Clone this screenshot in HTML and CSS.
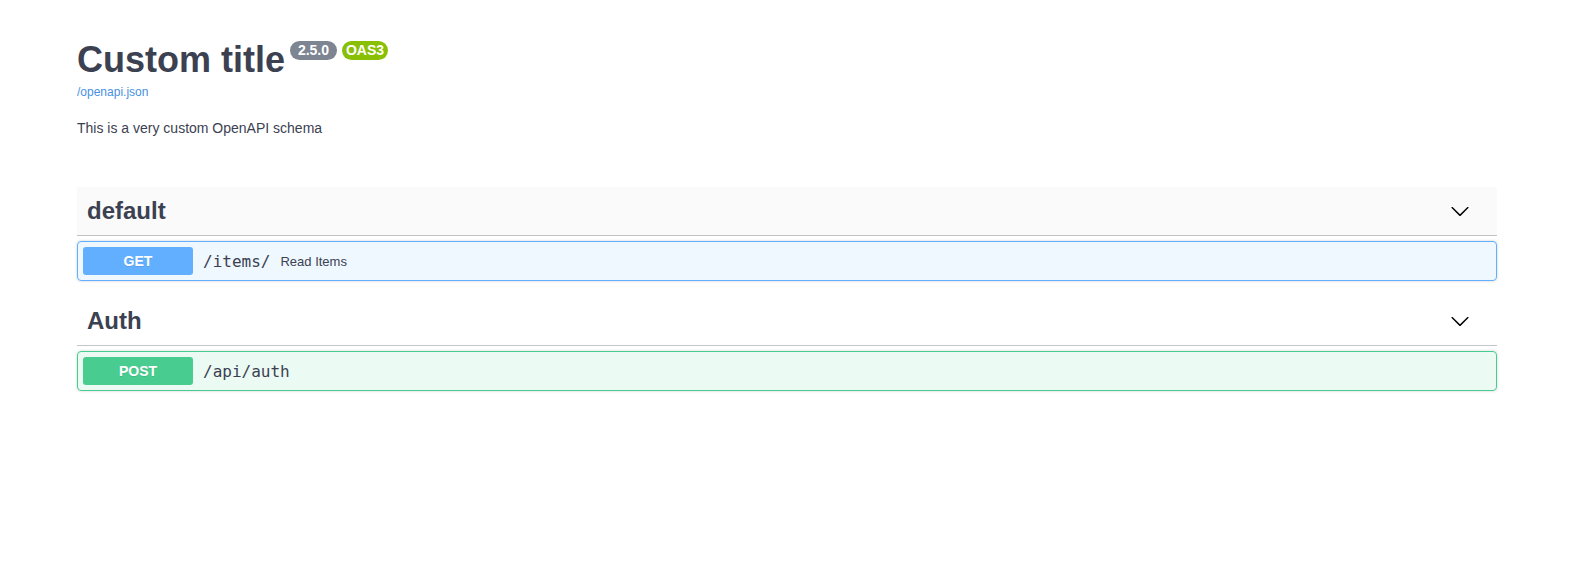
FILE: index.html
```
<!DOCTYPE html>
<html lang="en">
<head>
<meta charset="utf-8">
<title>Custom title - Swagger UI</title>
<link rel="stylesheet" href="styles.css">
</head>
<body>
<div class="swagger-ui">
  <div class="wrapper">
    <div class="info">
      <hgroup class="main">
        <h2 class="title">Custom title<span class="badges"><small class="badge"><pre class="version"> 2.5.0 </pre></small><small class="badge version-stamp"><pre class="version">OAS3</pre></small></span></h2>
        <a class="link" href="#">/openapi.json</a>
      </hgroup>
      <div class="description">
        <p>This is a very custom OpenAPI schema</p>
      </div>
    </div>

    <section class="tag-section">
      <h3 class="opblock-tag hovered">
        <span class="tag-name">default</span>
        <button class="expand-operation" aria-label="collapse">
          <svg viewBox="0 0 20 20" width="20" height="20"><path d="M17.418 6.109c.272-.268.709-.268.979 0s.271.701 0 .969l-7.908 7.83c-.27.268-.707.268-.979 0l-7.908-7.830c-.27-.268-.27-.701 0-.969.271-.268.709-.268.979 0L10 13.25l7.418-7.141z"/></svg>
        </button>
      </h3>
      <div class="opblock opblock-get">
        <div class="opblock-summary">
          <span class="method">GET</span>
          <span class="path">/items/</span>
          <span class="summary-desc">Read Items</span>
        </div>
      </div>
    </section>

    <section class="tag-section">
      <h3 class="opblock-tag">
        <span class="tag-name">Auth</span>
        <button class="expand-operation" aria-label="collapse">
          <svg viewBox="0 0 20 20" width="20" height="20"><path d="M17.418 6.109c.272-.268.709-.268.979 0s.271.701 0 .969l-7.908 7.83c-.27.268-.707.268-.979 0l-7.908-7.830c-.27-.268-.27-.701 0-.969.271-.268.709-.268.979 0L10 13.25l7.418-7.141z"/></svg>
        </button>
      </h3>
      <div class="opblock opblock-post">
        <div class="opblock-summary">
          <span class="method">POST</span>
          <span class="path">/api/auth</span>
        </div>
      </div>
    </section>
  </div>
</div>
</body>
</html>
```

FILE: styles.css
```
html, body {
  margin: 0;
  padding: 0;
  background: #fff;
}

body {
  font-family: "Liberation Sans", Arial, sans-serif;
  color: #3b4151;
}

.wrapper {
  width: 1420px;
  margin: 0 0 0 77px;
  padding-bottom: 40px;
}

.info {
  padding-top: 39px;
  margin-bottom: 51px;
}

.main {
  margin: 0 0 21px;
}

.title {
  display: flex;
  align-items: flex-start;
  margin: 0;
  font-size: 36px;
  line-height: 41px;
  font-weight: 700;
  color: #3b4151;
}

.badges {
  display: flex;
  gap: 5px;
  margin: 2px 0 0 5px;
}

.badge {
  display: inline-block;
  background: #7d8492;
  border-radius: 57px;
  padding: 2px 4px;
}

.badge.version-stamp {
  background: #89bf04;
}

.badge pre {
  margin: 0;
  padding: 0;
  font-family: "Liberation Sans", Arial, sans-serif;
  font-size: 14px;
  line-height: 15px;
  font-weight: 700;
  color: #fff;
  white-space: pre;
}

.link {
  display: block;
  margin-top: 5px;
  font-size: 12px;
  line-height: 14px;
  color: #4990e2;
  text-decoration: none;
}

.description p {
  margin: 0;
  font-size: 14px;
  line-height: 16px;
  color: #3b4151;
}

.tag-section {
  display: flex;
  flex-direction: column;
}

.opblock-tag {
  display: flex;
  align-items: center;
  margin: 0 0 5px;
  padding: 10px 20px 10px 10px;
  border-bottom: 1px solid rgba(59, 65, 81, 0.3);
  font-size: 24px;
  line-height: 28px;
  font-weight: 700;
  color: #3b4151;
}

.opblock-tag.hovered {
  background: rgba(0, 0, 0, 0.02);
}

.tag-name {
  flex: 1 1 auto;
}

.expand-operation {
  display: flex;
  align-items: center;
  border: none;
  background: none;
  padding: 0 7px 0 0;
  margin: 0;
}

.expand-operation svg {
  width: 20px;
  height: 20px;
  fill: #000;
}

.opblock {
  margin: 0 0 16px;
  border: 1px solid #000;
  border-radius: 4px;
  box-shadow: 0 0 3px rgba(0, 0, 0, 0.19);
}

.opblock-get {
  background: rgba(97, 175, 254, 0.1);
  border-color: #61affe;
}

.opblock-post {
  background: rgba(73, 204, 144, 0.1);
  border-color: #49cc90;
}

.opblock-summary {
  display: flex;
  align-items: center;
  padding: 5px;
}

.method {
  width: 110px;
  padding: 6px 0;
  border-radius: 3px;
  font-size: 14px;
  line-height: 16px;
  font-weight: 700;
  text-align: center;
  color: #fff;
  text-shadow: 0 1px 0 rgba(0, 0, 0, 0.1);
}

.opblock-get .method {
  background: #61affe;
}

.opblock-post .method {
  background: #49cc90;
}

.path {
  padding: 0 10px;
  font-family: "DejaVu Sans Mono", "Liberation Mono", monospace;
  font-size: 16px;
  color: #3b4151;
}

.summary-desc {
  flex: 1 1 auto;
  font-size: 13px;
  color: #3b4151;
}
```
